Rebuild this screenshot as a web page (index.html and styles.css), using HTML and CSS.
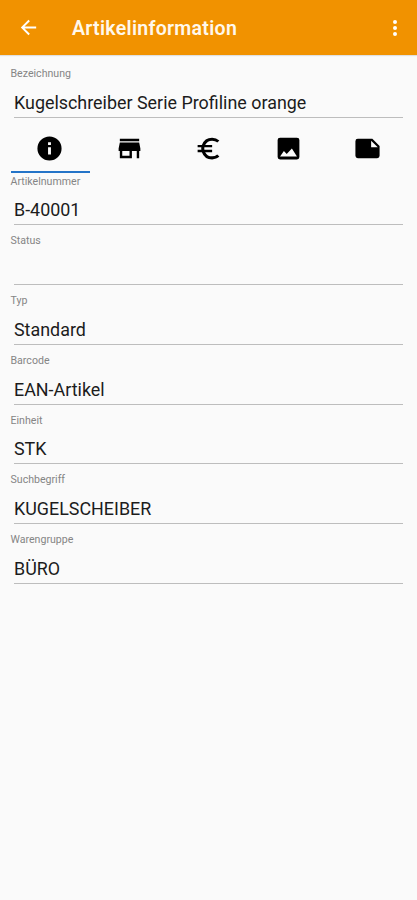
FILE: index.html
```html
<!DOCTYPE html>
<html lang="de">
<head>
<meta charset="utf-8">
<title>Artikelinformation</title>
<link rel="stylesheet" href="styles.css">
</head>
<body>
<header class="bar">
  <svg class="back" viewBox="0 0 24 24"><path d="M20 11H7.83l5.59-5.59L12 4l-8 8 8 8 1.41-1.41L7.83 13H20v-2z"/></svg>
  <h1 class="title"><span>Artikelinformation</span></h1>
  <svg class="more" viewBox="0 0 24 24"><path d="M12 8a2 2 0 1 0 0-4 2 2 0 0 0 0 4zm0 2a2 2 0 1 0 0 4 2 2 0 0 0 0-4zm0 6a2 2 0 1 0 0 4 2 2 0 0 0 0-4z"/></svg>
</header>
<main class="content">
  <section class="field"><div class="label">Bezeichnung</div><div class="value">Kugelschreiber Serie Profiline orange</div></section>
  <nav class="tabs">
    <div class="tab active"><svg viewBox="0 0 24 24"><path d="M12 2a10 10 0 1 0 0 20 10 10 0 0 0 0-20zm1.2 15h-2.4v-6h2.4v6zm0-7.8h-2.4V6.8h2.4v2.4z"/></svg></div>
    <div class="tab"><svg viewBox="0 0 24 24"><path d="M20 4H4v2h16V4zm1 10v-2l-1-5H4l-1 5v2h1v6h10v-6h4v6h2v-6h1zm-9 4H6v-4h6v4z"/></svg></div>
    <div class="tab"><svg viewBox="0 0 24 24"><path d="M15 18.5A6.48 6.48 0 0 1 9.24 15H15v-2H8.58a6.7 6.7 0 0 1 0-2H15V9H9.24A6.49 6.49 0 0 1 15 5.5c1.61 0 3.09.59 4.23 1.57L21 5.3A8.96 8.96 0 0 0 15 3a9 9 0 0 0-8.48 6H3v2h3.06a8.3 8.3 0 0 0 0 2H3v2h3.52A9 9 0 0 0 15 21c2.31 0 4.41-.87 6-2.3l-1.78-1.77A6.4 6.4 0 0 1 15 18.5z"/></svg></div>
    <div class="tab"><svg viewBox="0 0 24 24"><path d="M21 19V5a2 2 0 0 0-2-2H5a2 2 0 0 0-2 2v14a2 2 0 0 0 2 2h14a2 2 0 0 0 2-2zM8.2 14l2.3 2.6L14.8 12l4.2 6.7H5L8.2 14z"/></svg></div>
    <div class="tab"><svg viewBox="0 0 24 24"><path d="M22 10l-6-6H4a2 2 0 0 0-2 2v12.01a2 2 0 0 0 2 1.99h16a2 2 0 0 0 2-2v-8zm-7-4.5l5.5 5.5H15V5.5z"/></svg></div>
  </nav>
  <section class="field"><div class="label">Artikelnummer</div><div class="value">B-40001</div></section>
  <section class="field"><div class="label">Status</div><div class="value"></div></section>
  <section class="field"><div class="label">Typ</div><div class="value">Standard</div></section>
  <section class="field"><div class="label">Barcode</div><div class="value">EAN-Artikel</div></section>
  <section class="field"><div class="label">Einheit</div><div class="value">STK</div></section>
  <section class="field"><div class="label">Suchbegriff</div><div class="value">KUGELSCHEIBER</div></section>
  <section class="field"><div class="label">Warengruppe</div><div class="value">BÜRO</div></section>
</main>
</body>
</html>
```
FILE: styles.css
```css
* { box-sizing: border-box; }
body { margin: 0; min-height: 900px; background: #fafafa; color: #1c1c1c; font-family: Roboto, sans-serif; }
.bar { height: 55px; display: flex; align-items: center; padding: 0 10px 0 17px; background: #f19200; color: #fff; box-shadow: 0 1px 1px rgba(0, 0, 0, .1); }
svg { display: block; width: 24px; height: 24px; fill: currentColor; }
.back { width: 23px; height: 23px; }
.title { flex: 1; margin: 2px 0 0 32px; font-size: 19.5px; line-height: 24px; font-weight: 600; color: #fff8ec; }
.title span { letter-spacing: .3px; }
.content { padding: 11px 14px 0 10.5px; }
.field { height: 59.75px; }
.label { height: 15px; padding-top: .4px; font-size: 10.6px; line-height: 15px; color: #858585; }
.value { height: 37px; margin-left: 3.5px; border-bottom: 1px solid #bdbdbd; font-size: 17.9px; line-height: 44.6px; }
.tabs { height: 47.5px; display: flex; margin-right: -4.5px; }
.tab { flex: 1; display: flex; align-items: center; justify-content: center; color: #000; border-bottom: 2px solid transparent; }
.tab svg { width: 29px; height: 29px; margin: .5px .7px 0 0; }
.active { border-bottom-color: #2474c8; }
```
